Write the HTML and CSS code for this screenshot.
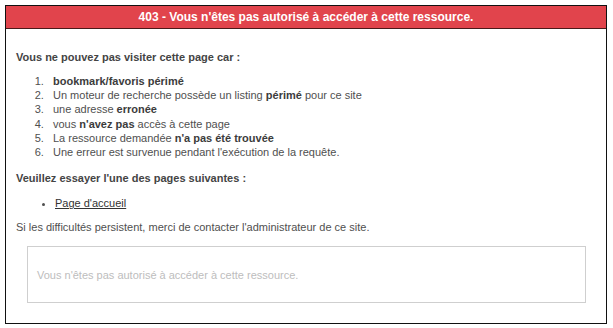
FILE: index.html
```html
<!DOCTYPE html>
<html lang="fr">
<head>
    <meta charset="UTF-8">
    <meta name="viewport" content="width=device-width, initial-scale=1.0">
    <title>403 - Accès refusé</title>
    <link rel="stylesheet" href="styles.css">
</head>
<body>
    <div class="container">
        <div class="header">
            <h1>403 - Vous n'êtes pas autorisé à accéder à cette ressource.</h1>
        </div>
        <div class="content">
            <p class="title">Vous ne pouvez pas visiter cette page car :</p>
            <ol class="reasons">
                <li><b>bookmark/favoris périmé</b></li>
                <li>Un moteur de recherche possède un listing <b>périmé</b> pour ce site</li>
                <li>une adresse <b>erronée</b></li>
                <li>vous <b>n'avez pas</b> accès à cette page</li>
                <li>La ressource demandée <b>n'a pas été trouvée</b></li>
                <li>Une erreur est survenue pendant l'exécution de la requête.</li>
            </ol>
            <p class="title">Veuillez essayer l'une des pages suivantes :</p>
            <ul class="links">
                <li><a href="#">Page d'accueil</a></li>
            </ul>
            <p class="note">Si les difficultés persistent, merci de contacter l'administrateur de ce site.</p>
            <div class="message">Vous n'êtes pas autorisé à accéder à cette ressource.</div>
        </div>
    </div>
</body>
</html>
```

FILE: styles.css
```css
*{
    margin: 0;
    padding: 0;
    box-sizing: border-box;
}
body{
    background-color: #fff;
    font-family: "Liberation Sans", Arial, Helvetica, sans-serif;
    font-size: 11px;
    line-height: 14px;
    color: #4f4f4f;
}
.container{
    margin: 5px 0 0 5px;
    width: 602px;
    height: 319px;
    border: 1px solid #111;
}
.header{
    background-color: #e1444c;
    border-bottom: 1px solid #4a1a1a;
    height: 23px;
    display: flex;
    align-items: center;
    justify-content: center;
}
.header h1{
    color: #fff;
    font-size: 12px;
    font-weight: bold;
}
.content{
    padding: 0 10px;
}
.title{
    font-weight: bold;
    margin-top: 21px;
    color: #444;
}
.content b{
    color: #3c3c3c;
}
.reasons{
    margin-top: 10px;
    padding-left: 37px;
}
.reasons li{
    line-height: 14.2px;
}
.reasons li::marker{
    content: counter(list-item) ".   ";
}
.content .title + .links{
    margin-top: 11px;
}
.content .reasons + .title{
    margin-top: 12px;
}
.links{
    padding-left: 39px;
}
.links a{
    color: #333;
}
.note{
    margin-top: 10px;
}
.message{
    margin: 12px 10px 0 11px;
    height: 57px;
    border: 1px solid #cfcfcf;
    color: #bdbdbd;
    padding-left: 9px;
    display: flex;
    align-items: center;
}
```
